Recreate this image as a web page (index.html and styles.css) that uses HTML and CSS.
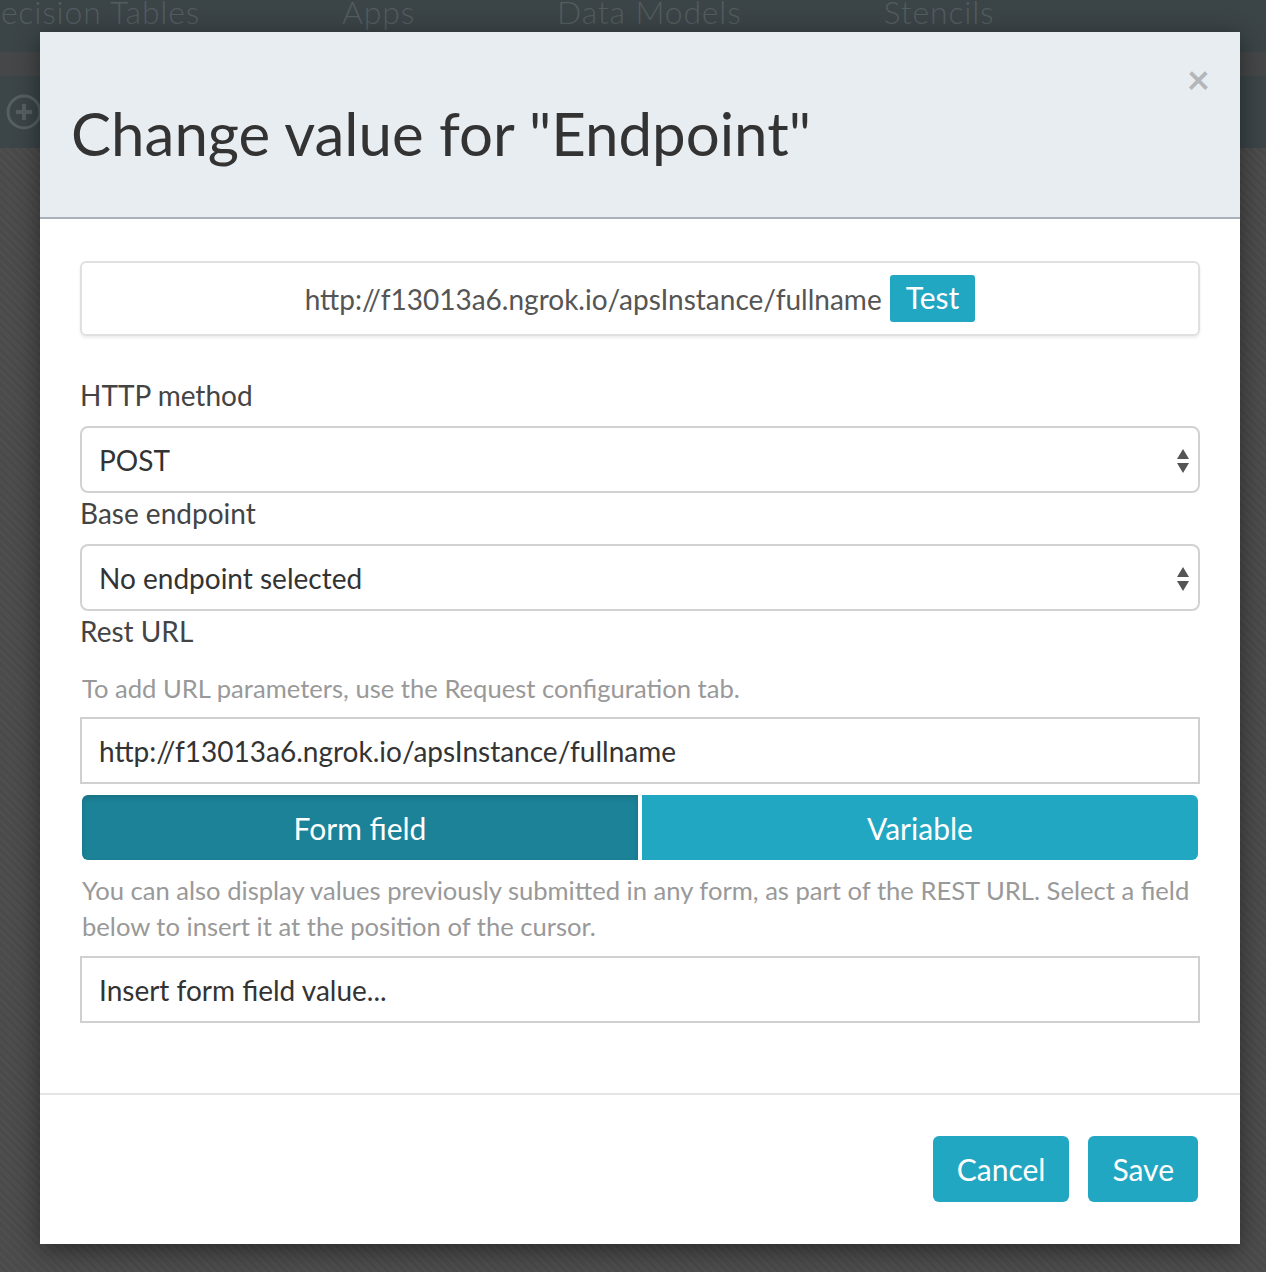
FILE: index.html
```html
<!DOCTYPE html>
<html>
<head>
<meta charset="utf-8">
<link rel="stylesheet" href="styles.css">
</head>
<body>
<div class="backdrop">
  <nav class="topnav">
    <span class="nav-item first">Decision Tables</span>
    <span class="nav-item">Apps</span>
    <span class="nav-item">Data Models</span>
    <span class="nav-item">Stencils</span>
  </nav>
  <div class="subbar"></div>
  <div class="toolbar">
    <svg class="tool-icon" width="40" height="40" viewBox="0 0 40 40"><circle cx="20" cy="20" r="16" fill="none" stroke="#566063" stroke-width="3"/><path d="M20 12v16M12 20h16" stroke="#566063" stroke-width="4"/></svg>
  </div>
  <div class="canvas"></div>
</div>

<div class="modal">
  <div class="modal-header">
    <h1 class="modal-title">Change value for "Endpoint"</h1>
    <span class="close">&times;</span>
  </div>
  <div class="modal-body">
    <div class="preview">
      <span class="preview-url">http://f13013a6.ngrok.io/apsInstance/fullname</span>
      <span class="test-btn">Test</span>
    </div>

    <label class="field-label label-method">HTTP method</label>
    <div class="select">
      <span>POST</span>
      <svg class="arrows" width="14" height="26" viewBox="0 0 14 26"><path d="M7 1L13 11H1Z M7 25L13 15H1Z" fill="#555"/></svg>
    </div>

    <label class="field-label label-tight">Base endpoint</label>
    <div class="select">
      <span>No endpoint selected</span>
      <svg class="arrows" width="14" height="26" viewBox="0 0 14 26"><path d="M7 1L13 11H1Z M7 25L13 15H1Z" fill="#555"/></svg>
    </div>

    <label class="field-label label-tight label-rest">Rest URL</label>
    <p class="help help-first">To add URL parameters, use the Request configuration tab.</p>
    <div class="input">http://f13013a6.ngrok.io/apsInstance/fullname</div>

    <div class="toggle">
      <span class="toggle-btn active">Form field</span>
      <span class="toggle-btn">Variable</span>
    </div>
    <p class="help help-second">You can also display values previously submitted in any form, as part of the REST URL. Select a field below to insert it at the position of the cursor.</p>
    <div class="input">Insert form field value...</div>
  </div>
  <div class="modal-footer">
    <span class="btn">Cancel</span>
    <span class="btn">Save</span>
  </div>
</div>
</body>
</html>
```

FILE: styles.css
```css
* { box-sizing: border-box; }
html, body { margin: 0; padding: 0; }
body {
  width: 1266px;
  height: 1272px;
  overflow: hidden;
  font-family: Lato, "Open Sans", sans-serif;
  background: #4a4a4a;
  position: relative;
}
.backdrop { display: flex; flex-direction: column; height: 1272px; overflow: hidden; }
.topnav {
  height: 52px;
  background: #3b4447;
  display: flex;
  align-items: flex-start;
  font-size: 32px;
  line-height: 23px;
  letter-spacing: 0.8px;
  color: #535c5f;
  font-weight: 300;
  white-space: nowrap;
  overflow: hidden;
}
.nav-item { margin-left: 142px; }
.nav-item.first { margin-left: -24px; }
.subbar { height: 24px; background: #464748; }
.toolbar {
  height: 72px;
  background: #3c4548;
  display: flex;
  align-items: center;
  padding-left: 4px;
}
.canvas {
  flex: 1;
  background-color: #4b4b4b;
  background-image: repeating-linear-gradient(45deg, rgba(255,255,255,0.015) 0 3px, rgba(0,0,0,0.02) 3px 6px);
}

.modal {
  position: absolute;
  left: 40px;
  top: 32px;
  width: 1200px;
  height: 1212px;
  background: #fff;
  box-shadow: 0 6px 24px rgba(0,0,0,0.45);
  display: flex;
  flex-direction: column;
}
.modal-header {
  height: 187px;
  background: #e8edf1;
  border-bottom: 2px solid #a8b0bb;
  position: relative;
  padding: 0 31px;
  display: flex;
  align-items: center;
}
.modal-title {
  margin: 0;
  font-size: 60px;
  font-weight: 400;
  color: #333;
  line-height: 1;
  padding-top: 16px;
}
.close {
  position: absolute;
  right: 30px;
  top: 27px;
  font-size: 40px;
  font-weight: 700;
  color: #b3b6ba;
  line-height: 1;
}
.modal-body {
  padding: 42px 40px 0;
  display: flex;
  flex-direction: column;
  height: 876px;
  border-bottom: 2px solid #e5e5e5;
}
.preview {
  height: 75px;
  border: 2px solid #e0e0e0;
  border-radius: 6px;
  box-shadow: 0 2px 3px rgba(0,0,0,0.08);
  display: flex;
  align-items: center;
  justify-content: center;
  gap: 8px;
}
.preview-url { font-size: 28px; color: #555; }
.test-btn {
  background: #22a7c3;
  color: #fff;
  font-size: 30px;
  border-radius: 3px;
  padding: 4px 16px 6px;
  line-height: 37px;
}
.field-label {
  font-size: 28px;
  color: #444;
  line-height: 36px;
  margin: 2px 0 13px;
}
.label-method { margin-top: 41px; }
.label-rest { margin-bottom: 0; }
.select {
  height: 67px;
  border: 2px solid #d2d2d2;
  border-radius: 8px;
  display: flex;
  align-items: center;
  justify-content: space-between;
  padding: 0 8px 0 17px;
  font-size: 28px;
  color: #333;
}
.arrows { margin-top: 2px; }
.help {
  margin: 0;
  font-size: 25.6px;
  color: #999;
  line-height: 36px;
}
.help-first { margin: 21px 2px 11px; }
.input {
  height: 67px;
  border: 2px solid #d0d0d0;
  display: flex;
  align-items: center;
  padding-left: 17px;
  font-size: 28px;
  color: #333;
}
.toggle {
  display: flex;
  gap: 4px;
  margin: 11px 2px 0;
  height: 65px;
}
.toggle-btn {
  flex: 1;
  background: #22a7c3;
  color: #fff;
  font-size: 30px;
  display: flex;
  align-items: center;
  justify-content: center;
}
.toggle-btn:first-child { border-radius: 6px 0 0 6px; }
.toggle-btn:last-child { border-radius: 0 6px 6px 0; }
.toggle-btn.active { background: #1b8298; box-shadow: inset 0 3px 5px rgba(0,0,0,0.12); }
.help-second { margin: 12px 0 12px 2px; }
.modal-footer {
  display: flex;
  justify-content: flex-end;
  gap: 19px;
  padding: 41px 42px 0;
}
.btn {
  background: #22a7c3;
  color: #fff;
  font-size: 30px;
  height: 66px;
  padding: 0 24px;
  border-radius: 6px;
  display: flex;
  align-items: center;
}
```
